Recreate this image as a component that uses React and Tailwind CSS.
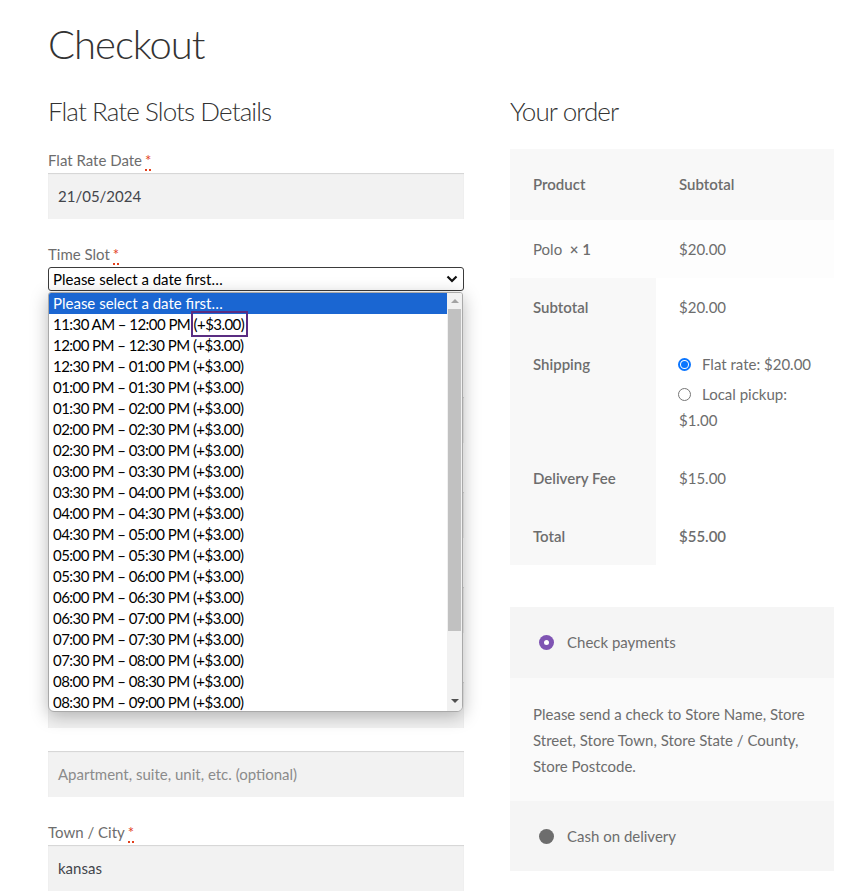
import React from "react";

const FONT = { fontFamily: "Lato, 'Noto Sans', sans-serif" };

const slots = [
  "11:30 AM – 12:00 PM",
  "12:00 PM – 12:30 PM",
  "12:30 PM – 01:00 PM",
  "01:00 PM – 01:30 PM",
  "01:30 PM – 02:00 PM",
  "02:00 PM – 02:30 PM",
  "02:30 PM – 03:00 PM",
  "03:00 PM – 03:30 PM",
  "03:30 PM – 04:00 PM",
  "04:00 PM – 04:30 PM",
  "04:30 PM – 05:00 PM",
  "05:00 PM – 05:30 PM",
  "05:30 PM – 06:00 PM",
  "06:00 PM – 06:30 PM",
  "06:30 PM – 07:00 PM",
  "07:00 PM – 07:30 PM",
  "07:30 PM – 08:00 PM",
  "08:00 PM – 08:30 PM",
  "08:30 PM – 09:00 PM",
];

function Req() {
  return (
    <abbr className="ml-[3px] text-[#e2401c] no-underline border-b-2 border-dotted border-[#e2401c] leading-none" title="required">
      *
    </abbr>
  );
}

function Label({ children, req = true }) {
  return (
    <label className="block text-[15px] leading-[26px] h-[26px] text-[#6d6d6d]">
      {children}
      {children && req && <Req />}
    </label>
  );
}

function Input({ value, placeholder }) {
  return (
    <div className="h-[46px] bg-[#f2f2f2] shadow-[inset_0_1px_1px_rgba(0,0,0,0.125)] px-[10px] flex items-center text-[15px]">
      {value ? (
        <span className="text-[#43454b]">{value}</span>
      ) : placeholder ? (
        <span className="text-[#8b8b8b]">{placeholder}</span>
      ) : null}
    </div>
  );
}

function Field({ label, value, placeholder, req = true, noLabel, mb = "mb-[23px]" }) {
  return (
    <div className={mb}>
      {!noLabel && <Label req={req}>{label}</Label>}
      <Input value={value} placeholder={placeholder} />
    </div>
  );
}

function Dropdown() {
  return (
    <div className="absolute left-0 top-[25px] w-[415px] h-[420px] bg-white border border-[#a9a9a9] rounded-b-[6px] rounded-t-[3px] shadow-[0_4px_18px_rgba(0,0,0,0.28)] overflow-hidden flex z-10">
      <div className="flex-1 flex flex-col text-[15px] leading-[21px] text-black">
        <div className="bg-[#1a66d2] text-white px-[4px] h-[21px]">Please select a date first…</div>
        {slots.map((s, i) => (
          <div key={s} className="px-[4px] h-[21px] whitespace-nowrap tracking-[-0.55px]">
            {s}{" "}
            {i === 0 ? (
              <span className="relative">
                (+$3.00)
                <span className="absolute -left-[3px] -right-[4px] -top-[4px] -bottom-[4px] border-2 border-[#5a2d82]" />
              </span>
            ) : (
              "(+$3.00)"
            )}
          </div>
        ))}
      </div>
      <div className="w-[15px] bg-[#f1f1f1] flex flex-col items-center">
        <div className="h-[16px] flex items-center justify-center">
          <span className="block w-0 h-0 border-l-[4px] border-r-[4px] border-b-[4px] border-l-transparent border-r-transparent border-b-[#a3a3a3]" />
        </div>
        <div className="w-[13px] h-[322px] bg-[#c1c1c1]" />
        <div className="flex-1" />
        <div className="h-[16px] flex items-center justify-center mb-[2px]">
          <span className="block w-0 h-0 border-l-[4px] border-r-[4px] border-t-[4px] border-l-transparent border-r-transparent border-t-[#505050]" />
        </div>
      </div>
    </div>
  );
}

function Radio({ checked }) {
  return checked ? (
    <span className="shrink-0 w-[13px] h-[13px] rounded-full border-[2px] border-[#0a75ff] flex items-center justify-center bg-white">
      <span className="w-[7px] h-[7px] rounded-full bg-[#0a75ff]" />
    </span>
  ) : (
    <span className="shrink-0 block w-[13px] h-[13px] rounded-full border border-[#767676] bg-white" />
  );
}

export default function App() {
  return (
    <div style={FONT} className="w-[860px] h-[894px] overflow-hidden bg-white pt-[18px] pl-[48px]">
      <h1 className="text-[40px] leading-[52px] font-light text-[#333333] tracking-[-1px]">Checkout</h1>
      <div className="mt-[24px] flex gap-[46px]">
        {/* Left column */}
        <div className="w-[416px]">
          <h2 className="text-[26px] leading-[34px] font-light text-[#333333] tracking-[-0.9px] mb-[19px]">Flat Rate Slots Details</h2>
          <Field label="Flat Rate Date" value="21/05/2024" mb="mb-[22px]" />
          <div className="mb-[23px]">
            <Label>Time Slot</Label>
            <div className="relative">
              <div className="h-[24px] border border-[#3b3b3b] rounded-[3px] bg-white flex items-center px-[4px] text-[15px] text-black">
                <span className="flex-1">Please select a date first…</span>
                <svg width="12" height="8" viewBox="0 0 12 8" className="mr-[1px]">
                  <path d="M1.5 1.5 L6 6 L10.5 1.5" fill="none" stroke="#111" strokeWidth="2.2" />
                </svg>
              </div>
              <Dropdown />
            </div>
          </div>
          {/* fields hidden behind the open list */}
          <div className="h-[57px]" />
          <Field label="" />
          <Field label="" />
          <Field label="" />
          <Field label="" />
          <Field noLabel placeholder="Apartment, suite, unit, etc. (optional)" mb="mb-[22px]" />
          <Field label="Town / City" value="kansas" />
        </div>

        {/* Right column */}
        <div className="w-[324px]">
          <h2 className="text-[26px] leading-[34px] font-light text-[#333333] tracking-[-0.9px] mb-[21px]">Your order</h2>
          <table className="w-full border-collapse text-[15px] text-[#6d6d6d]">
            <thead>
              <tr className="bg-[#f8f8f8]">
                <th className="w-[146px] text-left font-semibold pl-[23px] h-[71px]">Product</th>
                <th className="text-left font-semibold pl-[23px]">Subtotal</th>
              </tr>
            </thead>
            <tbody>
              <tr className="bg-[#fdfdfd]">
                <td className="pl-[23px] h-[58px]">
                  Polo&nbsp; <strong className="font-semibold">× 1</strong>
                </td>
                <td className="pl-[23px]">$20.00</td>
              </tr>
            </tbody>
            <tfoot>
              <tr>
                <th className="bg-[#f8f8f8] text-left font-semibold pl-[23px] h-[58px]">Subtotal</th>
                <td className="pl-[23px]">$20.00</td>
              </tr>
              <tr>
                <th className="bg-[#f8f8f8] text-left font-semibold pl-[23px] align-top pt-[15px] leading-[26px]">Shipping</th>
                <td className="pl-[22px] pr-[20px] pt-[15px] pb-[16px] leading-[26px]">
                  <div className="flex items-center gap-[11px] h-[26px]">
                    <Radio checked />
                    <span>Flat rate: $20.00</span>
                  </div>
                  <div className="mt-[4px] flex items-center gap-[11px] h-[26px]">
                    <Radio />
                    <span>Local pickup:</span>
                  </div>
                  <div className="pl-[1px]">$1.00</div>
                </td>
              </tr>
              <tr>
                <th className="bg-[#f8f8f8] text-left font-semibold pl-[23px] h-[58px]">Delivery Fee</th>
                <td className="pl-[23px]">$15.00</td>
              </tr>
              <tr>
                <th className="bg-[#f8f8f8] text-left font-semibold pl-[23px] h-[58px]">Total</th>
                <td className="pl-[23px] font-semibold">$55.00</td>
              </tr>
            </tfoot>
          </table>

          <div className="mt-[42px] text-[15px] text-[#6d6d6d]">
            <div className="bg-[#f5f5f5] h-[71px] flex items-center pl-[29px] gap-[13px]">
              <span className="w-[15px] h-[15px] rounded-full bg-[#7f54b3] flex items-center justify-center">
                <span className="w-[5px] h-[5px] rounded-full bg-white" />
              </span>
              <span>Check payments</span>
            </div>
            <div className="bg-[#fafafa] px-[23px] pt-[23px] pb-[22px] leading-[26px]">
              Please send a check to Store Name, Store Street, Store Town, Store State / County, Store Postcode.
            </div>
            <div className="bg-[#f5f5f5] h-[70px] flex items-center pl-[29px] gap-[13px]">
              <span className="w-[15px] h-[15px] rounded-full bg-[#6d6d6d]" />
              <span>Cash on delivery</span>
            </div>
          </div>
        </div>
      </div>
    </div>
  );
}
